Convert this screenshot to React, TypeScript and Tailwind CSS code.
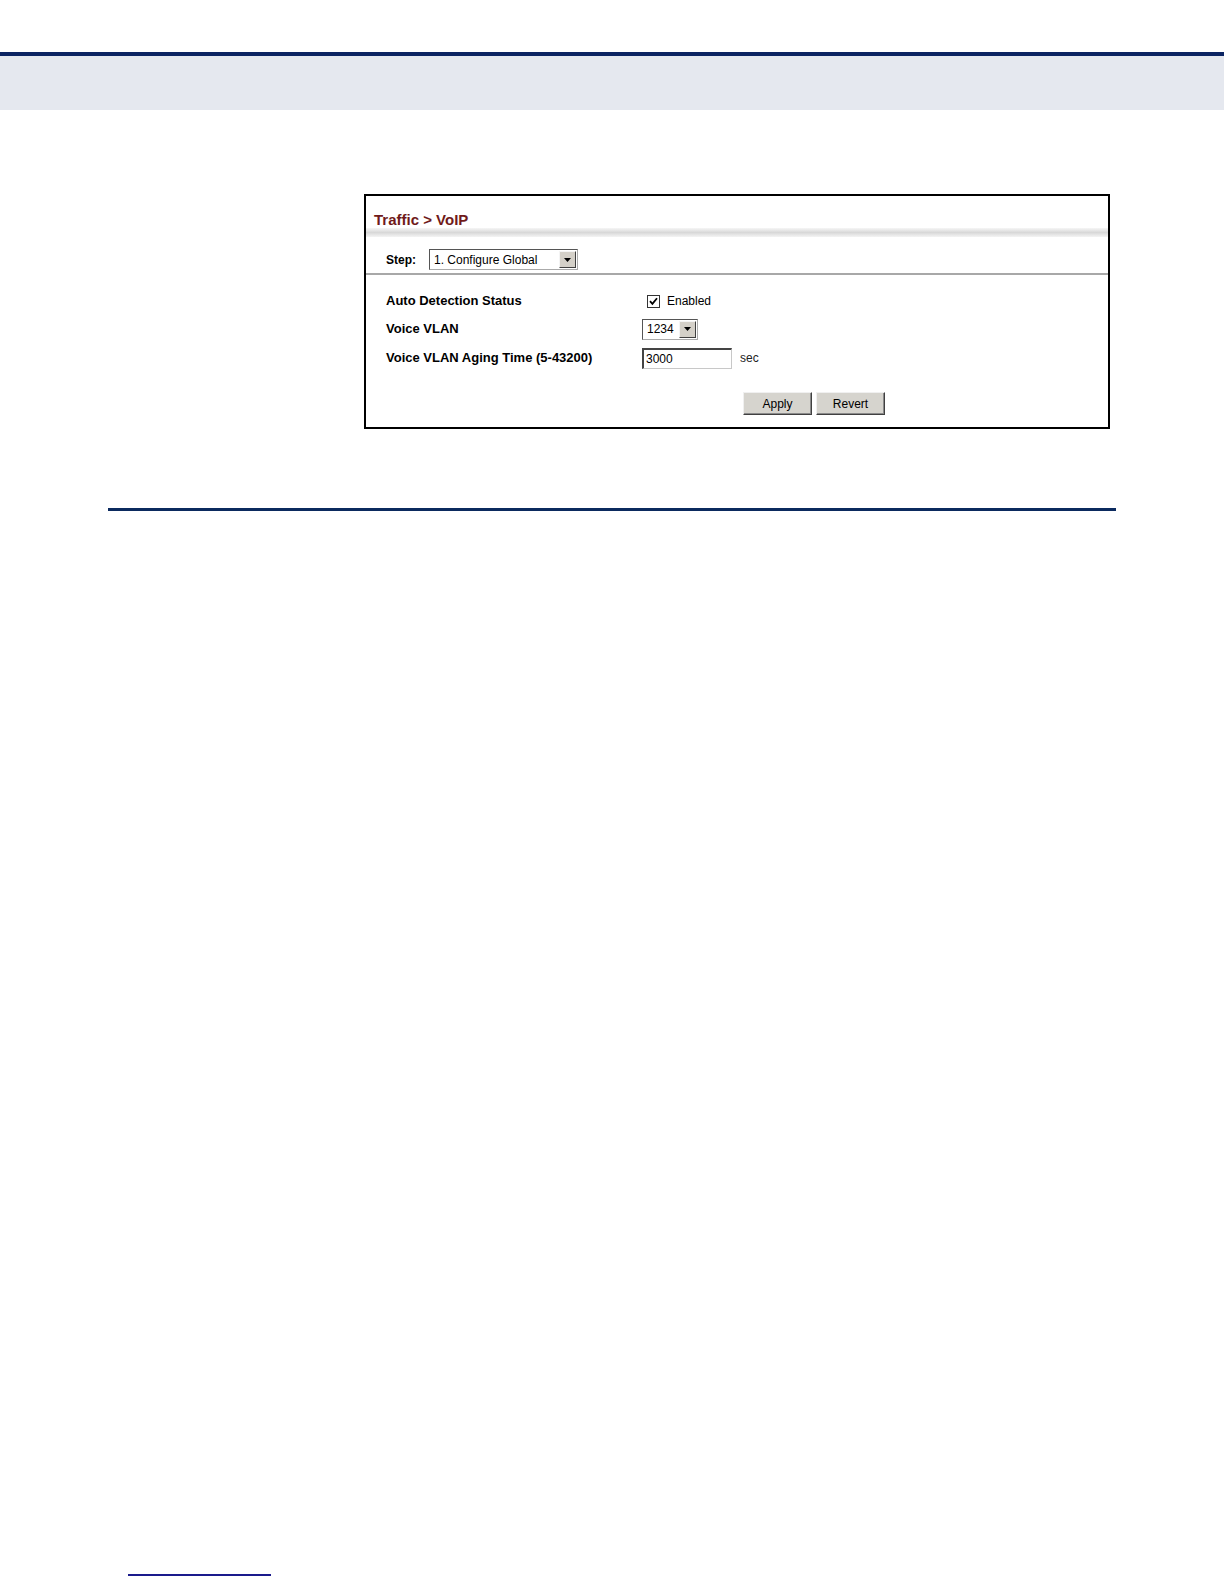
import React from 'react';

function ArrowBtn() {
  return (
    <div className="flex h-full w-[17px] items-center justify-center border-l border-t border-l-[#f4f4f4] border-t-[#f4f4f4] border-r border-b border-r-[#404040] border-b-[#404040] bg-[#d4d0c8]">
      <svg width="7" height="4" viewBox="0 0 7 4">
        <path d="M0 0 H7 L3.5 4 Z" fill="#000" />
      </svg>
    </div>
  );
}

function Select({ value, width }: { value: string; width: string }) {
  return (
    <div className={`flex h-[21px] ${width} items-stretch border border-t-[#555] border-l-[#555] border-r-[#aaa] border-b-[#aaa] bg-white p-[1px]`}>
      <div className="flex flex-1 items-center pl-[3px] text-[12px] text-black">{value}</div>
      <ArrowBtn />
    </div>
  );
}

function Button({ label }: { label: string }) {
  return (
    <button className="h-[23px] w-[69px] border border-t-[#f0f0f0] border-l-[#f0f0f0] border-r-[#404040] border-b-[#404040] bg-[#d6d4ce] text-[12px] text-black shadow-[inset_-1px_-1px_0_#8a8a8a]">
      {label}
    </button>
  );
}

export default function App() {
  return (
    <div className="min-h-[1584px] bg-white font-['Liberation_Sans',Arial,sans-serif]">
      <div className="h-[52px]" />
      <div className="h-[4px] bg-[#0b2462]" />
      <div className="h-[54px] bg-[#e5e8ef]" />

      <div className="ml-[364px] mt-[84px] w-[746px] border-2 border-black bg-white">
        <div className="flex h-[32px] items-start pl-[8px] pt-[15px] text-[15px] font-bold leading-[17px] text-[#701a1a]">
          Traffic &gt; VoIP
        </div>
        <div className="h-[9px] bg-gradient-to-b from-[#f6f6f6] via-[#d8d8d8] to-[#f4f4f4]" />
        <div className="flex h-[36px] items-end pb-[3px] pl-[20px]">
          <span className="mb-[2px] w-[43px] text-[12px] font-bold leading-[16px] text-black">Step:</span>
          <Select value="1. Configure Global" width="w-[149px]" />
        </div>
        <div className="h-[2px] bg-[#a8a8a8]" />

        <div className="pl-[20px] pt-[12px]">
          <div className="flex h-[28px] items-center">
            <div className="w-[256px] text-[13px] font-bold text-black">Auto Detection Status</div>
            <div className="flex items-center">
              <div className="ml-[5px] flex h-[13px] w-[13px] items-center justify-center border border-[#333] bg-white">
                <svg width="9" height="9" viewBox="0 0 9 9">
                  <path d="M1 4.2 L3.4 6.8 L8 1.2" stroke="#000" strokeWidth="1.8" fill="none" />
                </svg>
              </div>
              <span className="ml-[7px] text-[12px] text-black">Enabled</span>
            </div>
          </div>
          <div className="flex h-[28px] items-center">
            <div className="w-[256px] text-[13px] font-bold text-black">Voice VLAN</div>
            <Select value="1234" width="w-[56px]" />
          </div>
          <div className="flex h-[30px] items-center">
            <div className="w-[256px] text-[13px] font-bold text-black">Voice VLAN Aging Time (5-43200)</div>
            <div className="flex h-[21px] w-[90px] items-center border border-t-2 border-l-2 border-t-[#444] border-l-[#444] border-r-[#c8c8c8] border-b-[#c8c8c8] bg-white pl-[2px] text-[12px] text-black">
              3000
            </div>
            <span className="ml-[8px] text-[12px] text-[#222]">sec</span>
          </div>
        </div>

        <div className="mt-[19px] flex gap-[4px] pb-[12px] pl-[377px]">
          <Button label="Apply" />
          <Button label="Revert" />
        </div>
      </div>

      <div className="ml-[108px] mt-[79px] h-[3px] w-[1008px] bg-[#0b2a5e]" />

      <div className="ml-[128px] mt-[1063px] h-[2px] w-[143px] bg-[#1a1a8c]" />
    </div>
  );
}
